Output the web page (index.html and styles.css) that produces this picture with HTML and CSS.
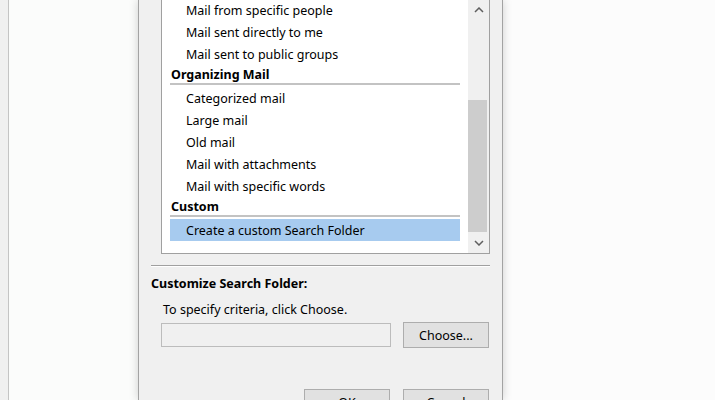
FILE: index.html
```html
<!DOCTYPE html>
<html lang="en">
<head>
    <meta charset="UTF-8">
    <title>New Search Folder</title>
    <link rel="stylesheet" href="styles.css">
</head>
<body>
    <div class="edge-strip"></div>
    <div class="page-left"></div>
    <div class="dialog">
        <div class="listbox">
            <div class="list-items">
                <div class="item">Mail from specific people</div>
                <div class="item">Mail sent directly to me</div>
                <div class="item">Mail sent to public groups</div>
                <div class="group">Organizing Mail</div>
                <div class="item">Categorized mail</div>
                <div class="item">Large mail</div>
                <div class="item">Old mail</div>
                <div class="item">Mail with attachments</div>
                <div class="item">Mail with specific words</div>
                <div class="group">Custom</div>
                <div class="item selected">Create a custom Search Folder</div>
            </div>
            <div class="scrollbar">
                <div class="scroll-btn">
                    <svg width="10" height="6" viewBox="0 0 10 6"><polyline points="1,5 5,1 9,5" fill="none" stroke="#5f5f5f" stroke-width="1.5"/></svg>
                </div>
                <div class="scroll-track">
                    <div class="scroll-thumb"></div>
                </div>
                <div class="scroll-btn">
                    <svg width="10" height="6" viewBox="0 0 10 6"><polyline points="1,1 5,5 9,1" fill="none" stroke="#5f5f5f" stroke-width="1.5"/></svg>
                </div>
            </div>
        </div>

        <div class="separator"></div>

        <div class="section-title">Customize Search Folder:</div>
        <div class="hint">To specify criteria, click Choose.</div>
        <div class="criteria-row">
            <input type="text" class="criteria-field" disabled>
            <button class="btn">Choose...</button>
        </div>

        <div class="dialog-buttons">
            <button class="btn">OK</button>
            <button class="btn">Cancel</button>
        </div>
    </div>
    <div class="page-right"></div>
</body>
</html>
```

FILE: styles.css
```css
/* styles.css */
body {
    margin: 0;
    height: 400px;
    overflow: hidden;
    display: flex;
    background-color: #fcfcfc;
    font-family: "Noto Sans", "Open Sans", sans-serif;
    font-size: 12.5px;
    color: #000;
}

.edge-strip {
    width: 8px;
    background-color: #f0f0f0;
    border-right: 1px solid #c4c4c4;
}

.page-left {
    width: 129px;
    background-color: #fbfcfb;
}

.page-right {
    flex: 1;
    background-color: #fcfcfc;
}

.dialog {
    display: flex;
    flex-direction: column;
    padding: 0 12px 0 12px;
    box-sizing: border-box;
    width: 365px;
    background-color: #f0f0f0;
    border-left: 1px solid #a3a3a3;
    border-right: 1px solid #a3a3a3;
    box-shadow: 0 0 9px rgba(0, 0, 0, 0.18);
    position: relative;
    z-index: 1;
}

.listbox {
    display: flex;
    margin: -2px 0 0 10px;
    height: 255px;
    background-color: #fff;
    border: 1px solid #a0a0a0;
}

.list-items {
    flex: 1;
    padding: 0 8px;
}

.item {
    height: 22px;
    box-sizing: border-box;
    padding: 1px 0 0 16px;
    line-height: 21px;
    white-space: nowrap;
}

.item.selected {
    background-color: #a7cbef;
}

.group {
    height: 18px;
    box-sizing: border-box;
    padding: 1px 0 0 1px;
    line-height: 17px;
    font-weight: bold;
    border-bottom: 2px solid #c3c3c3;
    margin-bottom: 2px;
    height: 20px;
}

.scrollbar {
    width: 21px;
    display: flex;
    flex-direction: column;
    background-color: #f0f0f0;
}

.scroll-btn {
    height: 21px;
    display: flex;
    align-items: center;
    justify-content: center;
}

.scroll-track {
    flex: 1;
    padding-top: 80px;
}

.scroll-thumb {
    width: 19px;
    height: 132px;
    background-color: #cdcdcd;
}

.separator {
    margin-top: 11px;
    border-top: 1px solid #a0a0a0;
    border-bottom: 1px solid #fff;
}

.section-title {
    margin-top: 7px;
    line-height: 20px;
    font-weight: bold;
}

.hint {
    margin-top: 6px;
    padding-left: 12px;
    line-height: 20px;
}

.criteria-row {
    display: flex;
    align-items: center;
    margin-top: 2px;
    padding: 0 1px 0 10px;
}

.criteria-field {
    width: 230px;
    height: 24px;
    box-sizing: border-box;
    margin: 0;
    background-color: #f0f0f0;
    border: 1px solid #bcbcbc;
}

.btn {
    width: 86px;
    height: 26px;
    margin-left: auto;
    padding: 0;
    background-color: #e1e1e1;
    border: 1px solid #adadad;
    font-family: inherit;
    font-size: 12.5px;
    color: #000;
}

.dialog-buttons {
    display: flex;
    justify-content: flex-end;
    gap: 13px;
    margin-top: 41px;
    padding-right: 1px;
}

.dialog-buttons .btn {
    margin-left: 0;
}
```
